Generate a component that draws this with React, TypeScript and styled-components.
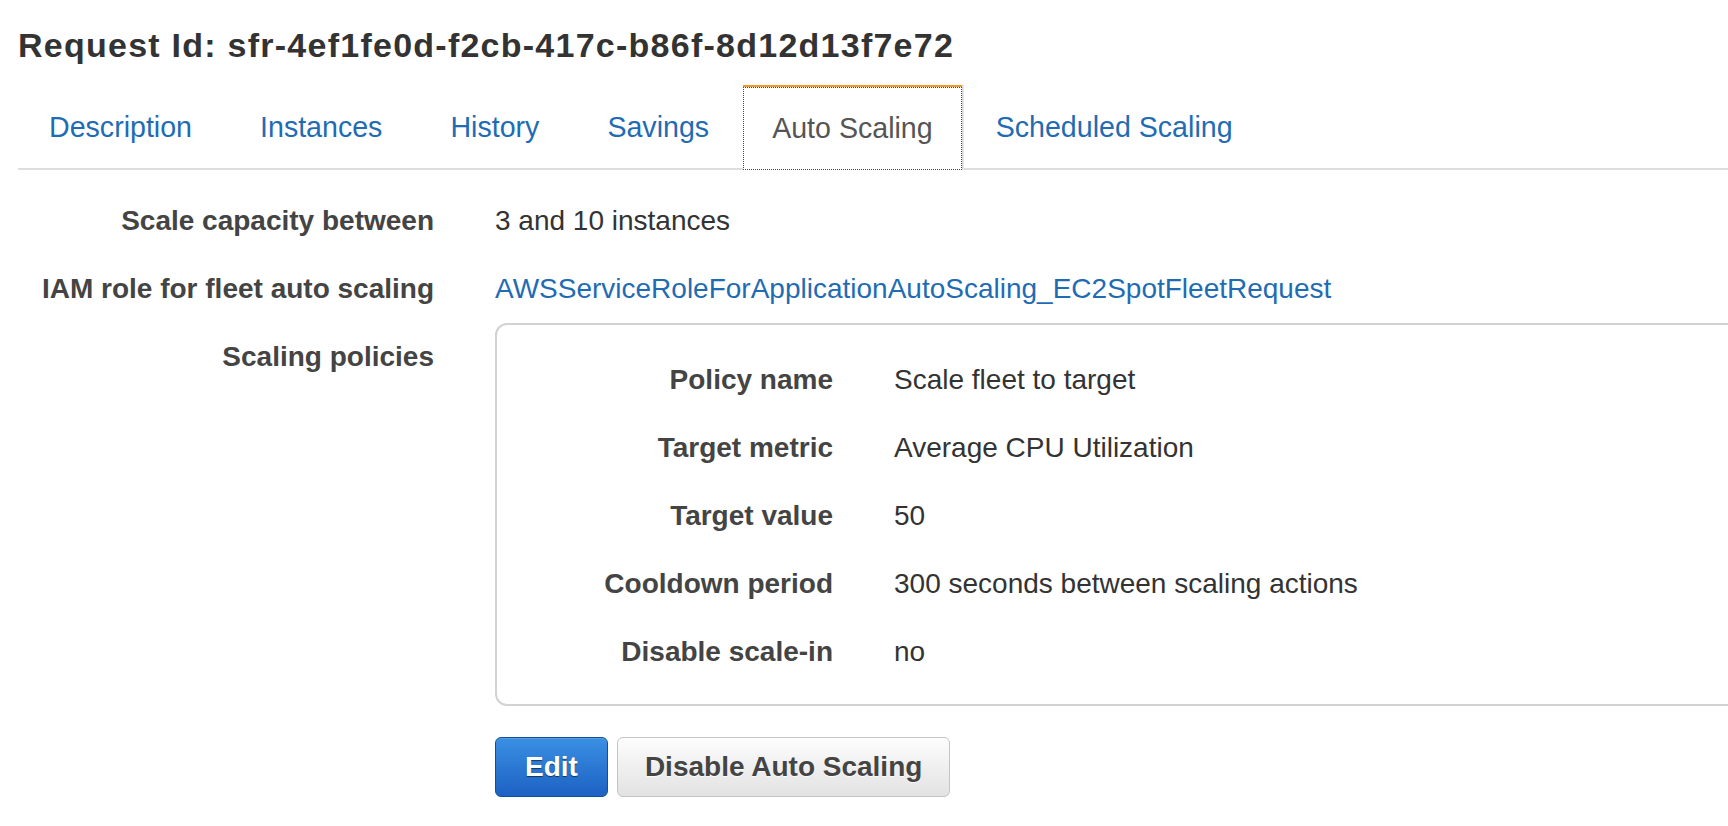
import React from "react";
import styled, { createGlobalStyle } from "styled-components";

const GlobalStyle = createGlobalStyle`
  html, body { margin: 0; padding: 0; background: #fff; }
  body {
    overflow-x: hidden;
    font-family: "Liberation Sans", Arial, Helvetica, sans-serif;
    -webkit-font-smoothing: antialiased;
  }
`;

const BLUE = "#1f6cb4";

const Page = styled.div`
  padding: 25px 0 40px 18px;
`;

const Title = styled.h1`
  margin: 0;
  font-size: 34px;
  line-height: 40px;
  font-weight: 700;
  color: #333;
  letter-spacing: 1.25px;
`;

const TabBar = styled.div`
  display: flex;
  align-items: flex-start;
  margin-top: 20px;
  height: 83px;
  border-bottom: 2px solid #dddddd;
`;

const Tab = styled.a`
  display: block;
  padding: 26px 34px 25px;
  font-size: 28.6px;
  line-height: 32px;
  color: ${BLUE};
  text-decoration: none;
  cursor: pointer;
  &:first-child {
    padding-left: 31px;
  }
`;

const ActiveTabFrame = styled.div`
  border-top: 2px solid #f7981c;
  background: #fff;
  box-shadow: 1px 0 0 #d6d6d6, 2px 0 0 #e6e6e6;
  position: relative;
  z-index: 1;
`;

const ActiveTabFocus = styled.div`
  border: 1px dotted #444;
  padding: 24px 28px 25px;
  font-size: 28.6px;
  line-height: 32px;
  color: #555;
`;

const Details = styled.div`
  display: grid;
  grid-template-columns: 416px auto;
  column-gap: 61px;
  align-items: start;
  margin-top: 17px;
`;

const Label = styled.div`
  padding: 18px 0;
  font-size: 28px;
  line-height: 32px;
  font-weight: 700;
  color: #444;
  text-align: right;
  white-space: nowrap;
`;

const Value = styled.div`
  padding: 18px 0;
  font-size: 28px;
  line-height: 32px;
  color: #333;
  white-space: nowrap;
`;

const Link = styled.a`
  color: ${BLUE};
  text-decoration: none;
  cursor: pointer;
`;

const PolicyPanel = styled.div`
  width: 1320px;
  border: 2px solid #d2d2d2;
  border-radius: 12px;
  padding: 21px 0 18px;
  display: grid;
  grid-template-columns: 336px auto;
  column-gap: 61px;
`;

const ActionCell = styled.div`
  grid-column: 2;
  display: flex;
  gap: 9px;
  margin-top: 31px;
`;

const Button = styled.button<{ $primary?: boolean }>`
  height: 60px;
  padding: 0 ${(p) => (p.$primary ? "29px" : "27px")};
  border-radius: 6px;
  font-family: inherit;
  font-size: 28px;
  line-height: 32px;
  font-weight: 700;
  cursor: pointer;
  border: 1px solid ${(p) => (p.$primary ? "#124f9a" : "#c4c4c4")};
  color: ${(p) => (p.$primary ? "#fff" : "#444")};
  background: ${(p) =>
    p.$primary
      ? "linear-gradient(#3a8fe3, #1c62c3)"
      : "linear-gradient(#fdfdfd, #e2e2e2)"};
  text-shadow: ${(p) =>
    p.$primary ? "0 1px 1px rgba(0,0,0,0.55)" : "0 1px 0 rgba(255,255,255,0.8)"};
  box-shadow: ${(p) =>
    p.$primary ? "inset 0 1px 0 rgba(255,255,255,0.15)" : "inset 0 1px 0 #fff"};
`;

const tabs = ["Description", "Instances", "History", "Savings"];

const policy: [string, string][] = [
  ["Policy name", "Scale fleet to target"],
  ["Target metric", "Average CPU Utilization"],
  ["Target value", "50"],
  ["Cooldown period", "300 seconds between scaling actions"],
  ["Disable scale-in", "no"],
];

export default function App() {
  return (
    <>
      <GlobalStyle />
      <Page>
        <Title>Request Id: sfr-4ef1fe0d-f2cb-417c-b86f-8d12d13f7e72</Title>
        <TabBar>
          {tabs.map((t) => (
            <Tab key={t}>{t}</Tab>
          ))}
          <ActiveTabFrame>
            <ActiveTabFocus>Auto Scaling</ActiveTabFocus>
          </ActiveTabFrame>
          <Tab>Scheduled Scaling</Tab>
        </TabBar>
        <Details>
          <Label>Scale capacity between</Label>
          <Value>3 and 10 instances</Value>
          <Label>IAM role for fleet auto scaling</Label>
          <Value>
            <Link>AWSServiceRoleForApplicationAutoScaling_EC2SpotFleetRequest</Link>
          </Value>
          <Label>Scaling policies</Label>
          <PolicyPanel>
            {policy.map(([k, v]) => (
              <React.Fragment key={k}>
                <Label>{k}</Label>
                <Value>{v}</Value>
              </React.Fragment>
            ))}
          </PolicyPanel>
          <ActionCell>
            <Button $primary>Edit</Button>
            <Button>Disable Auto Scaling</Button>
          </ActionCell>
        </Details>
      </Page>
    </>
  );
}
